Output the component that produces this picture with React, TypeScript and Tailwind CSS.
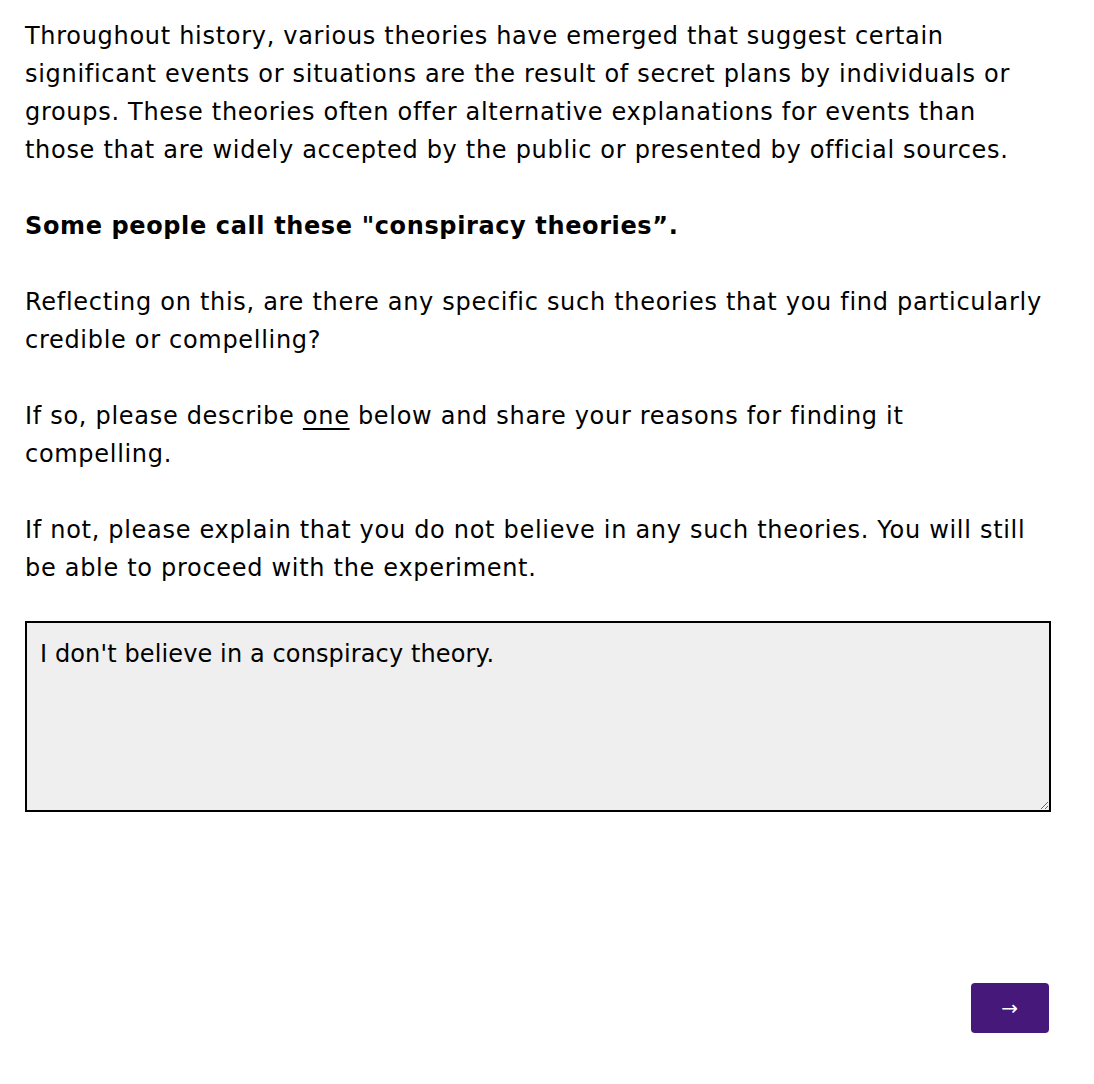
export default function App() {
    return (
        <div className="min-h-screen bg-white px-[25px] pt-[17px] text-black" style={{ fontFamily: '"DejaVu Sans", Verdana, sans-serif' }}>
            <div className="w-[1026px] text-[24px] leading-[38px] tracking-[0.7px]">
                <p className="mb-[38px]">
                    Throughout history, various theories have emerged that suggest certain
                    <br />
                    significant events or situations are the result of secret plans by individuals or
                    <br />
                    groups. These theories often offer alternative explanations for events than
                    <br />
                    those that are widely accepted by the public or presented by official sources.
                </p>
                <p className="mb-[38px] font-bold tracking-[0.62px]">Some people call these "conspiracy theories”.</p>
                <p className="mb-[38px]">
                    Reflecting on this, are there any specific such theories that you find particularly
                    <br />
                    credible or compelling?
                </p>
                <p className="mb-[38px]">
                    If so, please describe <span className="underline underline-offset-4">one</span> below and share
                    your reasons for finding it
                    <br />
                    compelling.
                </p>
                <p>
                    If not, please explain that you do not believe in any such theories. You will still
                    <br />
                    be able to proceed with the experiment.
                </p>

                {/* Answer box */}
                <textarea
                    className="mt-[34px] block h-[191px] w-full resize-y border-2 border-black bg-[#efefef] px-[13px] py-[12px] text-[24px] leading-[38px] tracking-[0.12px] outline-none"
                    style={{ fontFamily: '"DejaVu Sans", Verdana, sans-serif' }}
                    defaultValue="I don't believe in a conspiracy theory."
                />

                <div className="mt-[171px] flex justify-end pr-[2px]">
                    <button className="flex h-[50px] w-[78px] items-center justify-center rounded-[4px] bg-[#45187a] text-[20px] text-white">
                        →
                    </button>
                </div>
            </div>
        </div>
    );
}
